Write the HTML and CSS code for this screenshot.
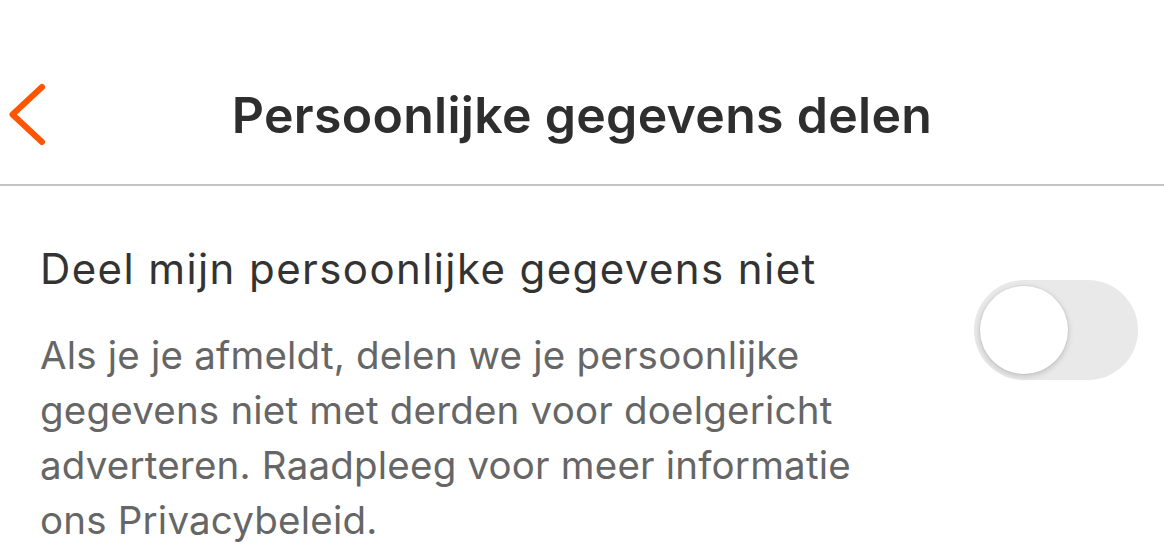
FILE: index.html
```html
<!DOCTYPE html>
<html lang="nl">
<head>
<meta charset="utf-8">
<link rel="stylesheet" href="styles.css">
</head>
<body>
<div class="screen">
  <header class="nav">
    <button class="back" aria-label="Terug">
      <svg width="56" height="72" viewBox="0 0 56 72"><path d="M42 7 L12.5 34.5 L42 62" fill="none" stroke="#ff5500" stroke-width="6" stroke-linecap="round" stroke-linejoin="round"/></svg>
    </button>
    <h1 class="title">Persoonlijke gegevens delen</h1>
  </header>
  <section class="row">
    <div class="text">
      <div class="label">Deel mijn persoonlijke gegevens niet</div>
      <p class="desc">Als je je afmeldt, delen we je persoonlijke gegevens niet met derden voor doelgericht adverteren. Raadpleeg voor meer informatie ons Privacybeleid.</p>
    </div>
    <div class="toggle"><div class="knob"></div></div>
  </section>
</div>
</body>
</html>
```
FILE: styles.css
```css
* { box-sizing: border-box; }
html, body { margin: 0; padding: 0; background: #fff; }
body { font-family: Inter, "Liberation Sans", Arial, sans-serif; }
.screen { width: 1164px; height: 558px; overflow: hidden; }
.nav {
  position: relative;
  height: 186px;
  padding-top: 70px;
  border-bottom: 2px solid #c4c4c4;
  display: flex;
  justify-content: center;
}
.back {
  position: absolute;
  left: 0;
  top: 80px;
  border: 0; background: none; padding: 0;
  width: 56px; height: 72px;
}
.back svg { display: block; }
.title {
  margin: 0;
  font-size: 50px;
  line-height: 90px;
  font-weight: 600;
  color: #2e2e2e;
  letter-spacing: 0.3px;
}
.row {
  display: flex;
  align-items: flex-start;
  padding: 59px 26px 0 40px;
}
.text { flex: 1; }
.label {
  font-size: 42px;
  line-height: 48px;
  color: #333;
  letter-spacing: 1.4px;
}
.desc {
  margin: 35px 0 0;
  width: 840px;
  font-size: 38.5px;
  line-height: 55px;
  color: #666;
  letter-spacing: 0.2px;
}
.toggle {
  margin-top: 35px;
  width: 164px;
  height: 100px;
  border-radius: 50px;
  background: #e9e9e9;
  padding: 6px;
  flex-shrink: 0;
}
.knob {
  width: 88px;
  height: 88px;
  border-radius: 50%;
  background: #fff;
  box-shadow: 0 2px 6px rgba(0,0,0,0.18), 0 0 0 1px rgba(0,0,0,0.04);
}
```
